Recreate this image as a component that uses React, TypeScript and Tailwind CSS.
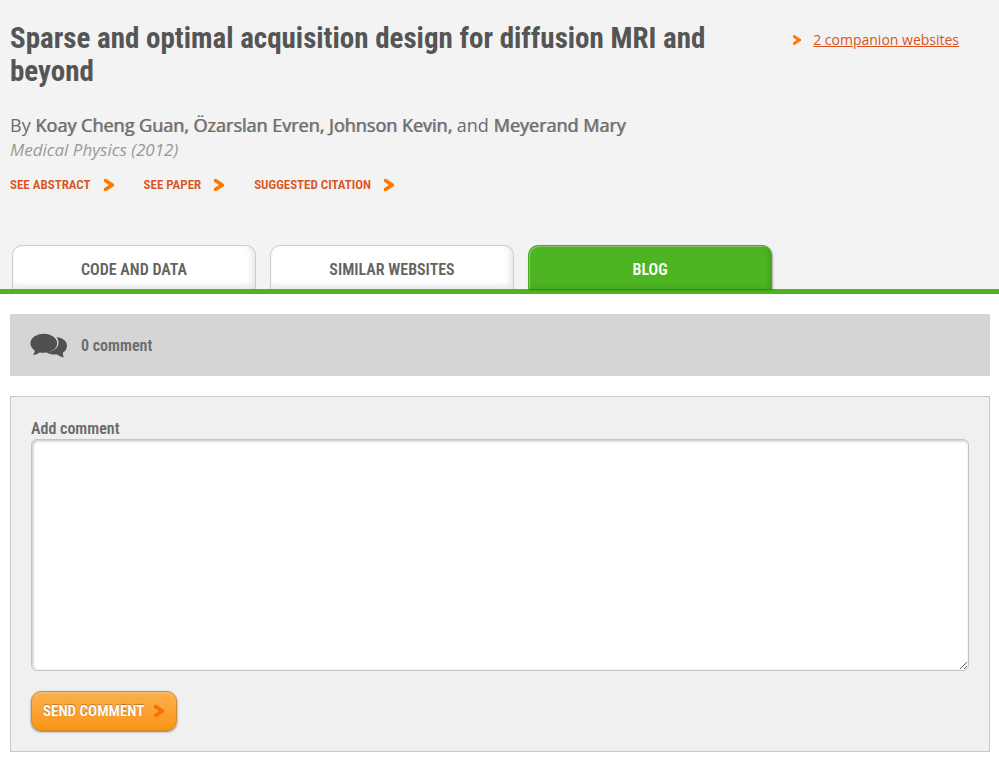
import React, { useState } from "react";

function Arrow({ className }: { className: string }) {
  return (
    <svg viewBox="0 0 10 12" className={className} aria-hidden="true">
      <path d="M0 0h2.500L10 5v2L2.500 12H0V9.200L4.900 6 0 2.800z" fill="currentColor" />
    </svg>
  );
}

function Bubbles() {
  return (
    <svg viewBox="0 0 38 26" className="h-[26px] w-[38px] shrink-0 text-[#505050]" aria-hidden="true">
      <path
        fill="currentColor"
        d="M26.500 4.300c6 .3 10.500 3.900 10.500 8.500 0 2.900-1.600 5.400-4.200 7 .1 1.700.5 3.200.9 4.800-2.600-.7-4.600-1.800-6.600-3.100-4.300.4-8.100-.4-11.100-2.200 7-.5 12.500-4.400 12.500-9.300 0-2.200-.6-4.200-2-5.700z"
      />
      <path
        fill="currentColor"
        d="M13.800.8c7.400 0 13.400 4.300 13.400 9.500s-6 9.500-13.400 9.500c-1.500 0-2.900-.1-4.200-.4-1.800 1.300-4 2.200-6.600 2.500 1-1.300 1.600-2.800 1.700-4.500C2 15.700.4 13.200.4 10.300.4 5.100 6.400.8 13.800.8z"
      />
    </svg>
  );
}

const actions = ["See abstract", "See paper", "Suggested citation"];
const tabs = ["Code and data", "Similar websites", "Blog"];

const tabBase =
  "h-11 w-[244px] rounded-t-[10px] border border-b-0 text-base font-semibold uppercase";
const tabIdle =
  "border-[#cccccc] bg-white text-[#636363] shadow-[inset_-3px_-3px_6px_rgba(0,0,0,0.1)]";
const tabActive =
  "border-[#48ab20] bg-[#4db422] text-white shadow-[inset_1px_1px_1px_rgba(255,255,255,0.35),inset_-2px_-1px_5px_rgba(0,0,0,0.12),1px_1px_2px_rgba(0,0,0,0.3)]";

const author = "font-normal text-shadow-[1px_0_0_rgba(99,99,99,0.6)]";

export default function App() {
  const [comment, setComment] = useState("");
  return (
    <div className="font-['Open_Sans',sans-serif] text-[#6b6b6b]">
      <header className="border-b-[5px] border-[#4db422] bg-[#f3f3f3] pt-5">
        <div className="flex px-2.5">
          <div className="w-4/5">
            <h1 className="pt-0.5 pr-[50px] font-['Roboto_Condensed',sans-serif] text-[29px] leading-[33px] font-bold text-[#555555]">
              Sparse and optimal acquisition design for diffusion MRI and beyond
            </h1>
            <p className="mt-[25px] text-lg leading-6">
              By <strong className={author}>Koay Cheng Guan, Özarslan Evren, Johnson Kevin,</strong> and{" "}
              <strong className={author}>Meyerand Mary</strong>
            </p>
            <p className="text-[17px] leading-[26px] text-[#999999] italic">Medical Physics (2012)</p>
            <nav className="mt-3 flex gap-[30px]">
              {actions.map((label) => (
                <a
                  key={label}
                  href="#"
                  className="flex items-center gap-[13px] font-['Roboto_Condensed',sans-serif] text-[13px] leading-5 font-semibold text-[#d9531e] uppercase"
                >
                  {label}
                  <Arrow className="h-3 w-2.5 text-[#ff7800]" />
                </a>
              ))}
            </nav>
          </div>
          <div className="w-1/5 pt-2">
            <a href="#" className="flex items-center gap-3 text-sm leading-6 text-[#d9531e]">
              <Arrow className="h-[10px] w-2 text-[#ff7800]" />
              <span className="underline">2 companion websites</span>
            </a>
          </div>
        </div>
        <nav className="mt-[50px] flex gap-3.5 px-3 font-['Roboto_Condensed',sans-serif]">
          {tabs.map((label) => (
            <button key={label} type="button" className={`${tabBase} ${label === "Blog" ? tabActive : tabIdle}`}>
              <span className="block pt-1">{label}</span>
            </button>
          ))}
        </nav>
      </header>
      <main className="px-2.5 pt-5 pr-[9px] pb-6 font-['Roboto_Condensed',sans-serif]">
        <h2 className="flex h-[62px] items-center gap-[13px] bg-[#d5d5d5] px-5 pt-0.5 text-base font-semibold">
          <Bubbles />
          0 comment
        </h2>
        <form
          className="mt-5 border border-[#c8c8c8] bg-[#f0f0f0] p-5"
          onSubmit={(event) => event.preventDefault()}
        >
          <label htmlFor="comment" className="block pt-0.5 text-base leading-5 font-semibold">
            Add comment
          </label>
          <textarea
            id="comment"
            value={comment}
            onChange={(event) => setComment(event.target.value)}
            className="block h-[232px] w-full rounded-md border border-[#c4c4c4] bg-white p-2 shadow-[inset_1px_1px_3px_rgba(0,0,0,0.25)] outline-none"
          />
          <button
            type="submit"
            className="mt-5 flex h-10 items-center gap-2.5 rounded-[10px] border border-[#d08a28] bg-linear-to-b from-[#fcb04c] to-[#f99408] pr-3 pl-[11px] text-[15px] font-semibold text-white uppercase shadow-[0_1px_2px_rgba(0,0,0,0.5),inset_0_1px_1px_rgba(255,255,255,0.3)] text-shadow-[0_-1px_1px_rgba(0,0,0,0.3)]"
          >
            Send comment
            <Arrow className="h-3 w-2.5 text-[#f87200]" />
          </button>
        </form>
      </main>
    </div>
  );
}
